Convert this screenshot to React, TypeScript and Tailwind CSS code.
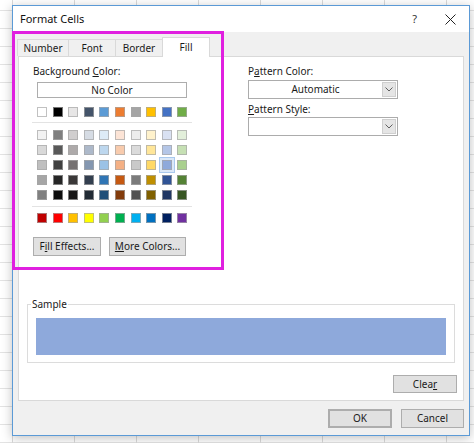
import React from 'react';

const font = { fontFamily: '"Noto Sans", "Open Sans", sans-serif' };

const themeRow = ['#FFFFFF', '#000000', '#E7E6E6', '#44546A', '#5B9BD5', '#ED7D31', '#A5A5A5', '#FFC000', '#4472C4', '#70AD47'];

const tints = [
  ['#F2F2F2', '#7F7F7F', '#D0CECE', '#D6DCE4', '#DDEBF7', '#FCE4D6', '#EDEDED', '#FFF2CC', '#D9E1F2', '#E2EFDA'],
  ['#D9D9D9', '#595959', '#AEAAAA', '#ADB9CA', '#BDD7EE', '#F8CBAD', '#DBDBDB', '#FFE699', '#B4C6E7', '#C6E0B4'],
  ['#BFBFBF', '#404040', '#757171', '#8497B0', '#9BC2E6', '#F4B084', '#C9C9C9', '#FFD966', '#8EA9DB', '#A9D08E'],
  ['#A6A6A6', '#262626', '#3B3838', '#333F4F', '#2F75B5', '#C65911', '#7B7B7B', '#BF8F00', '#305496', '#548235'],
  ['#808080', '#0D0D0D', '#171616', '#222B35', '#1F4E78', '#833C0C', '#525252', '#806000', '#203764', '#375623'],
];

const standard = ['#C00000', '#FF0000', '#FFC000', '#FFFF00', '#92D050', '#00B050', '#00B0F0', '#0070C0', '#002060', '#7030A0'];

function Swatch({ color, selected }: { color: string; selected?: boolean }) {
  return (
    <div
      className={
        'w-[10px] h-[10px] border border-[#a6a6a6]/70 ' +
        (selected ? 'shadow-[0_0_0_2px_#dbe8f8,0_0_0_3px_#a9c9ee]' : '')
      }
      style={{ backgroundColor: color }}
    />
  );
}

function SwatchRow({ colors, selectedIndex }: { colors: string[]; selectedIndex?: number }) {
  return (
    <div className="flex gap-x-[5.6px]">
      {colors.map((c, i) => (
        <Swatch key={i} color={c} selected={i === selectedIndex} />
      ))}
    </div>
  );
}

function Btn({ children, className = '' }: { children: React.ReactNode; className?: string }) {
  return (
    <div
      className={
        'flex items-center justify-center bg-[#e1e1e1] border border-[#adadad] text-[10px] text-[#1a1a1a] ' + className
      }
    >
      {children}
    </div>
  );
}

function Dropdown({ value }: { value?: string }) {
  return (
    <div className="flex w-[150px] h-[19px] bg-white border border-[#acacac]">
      <div className="flex-1 flex items-center justify-center text-[10px] text-[#1a1a1a]">{value}</div>
      <div className="w-[14px] my-[1px] mr-[1px] bg-[#e5e5e5] border border-[#cfcfcf] flex items-center justify-center">
        <svg width="8" height="5" viewBox="0 0 8 5">
          <path d="M0.5 0.5 L4 4 L7.5 0.5" fill="none" stroke="#606060" strokeWidth="1" />
        </svg>
      </div>
    </div>
  );
}

export default function App() {
  return (
    <div
      className="relative w-[474px] h-[443px] overflow-hidden bg-white pt-[5px] pl-[12px] bg-[linear-gradient(to_right,#dadada_1px,transparent_1px),linear-gradient(to_bottom,#e3e3e3_1px,transparent_1px)] bg-[size:62px_18px] bg-[position:12px_10px]"
      style={font}
    >
      {/* dialog */}
      <div className="w-[458px] h-[431px] border border-[#5b9ad6] bg-[#f0f0f0] flex flex-col shadow-[0_2px_10px_rgba(0,0,0,0.25)]">
        {/* title bar */}
        <div className="h-[26px] bg-white flex items-center pl-[7px] pr-[13px]">
          <span className="text-[11px] text-[#111]">Format Cells</span>
          <span className="ml-auto text-[11px] text-[#333] mr-[28px]">?</span>
          <svg width="11" height="11" viewBox="0 0 11 11">
            <path d="M0.5 0.5 L10.5 10.5 M10.5 0.5 L0.5 10.5" stroke="#222" strokeWidth="1" />
          </svg>
        </div>

        {/* body */}
        <div className="flex-1 flex flex-col px-[5px]">
          {/* tabs */}
          <div className="flex items-end h-[19px] mt-[5px] ml-[-1px]">
            <div className="w-[51px] h-[17px] border-t border-l border-[#d9d9d9] flex items-center justify-center text-[10px] text-[#1a1a1a]">
              Number
            </div>
            <div className="w-[47px] h-[17px] border-t border-l border-[#d9d9d9] flex items-center justify-center text-[10px] text-[#1a1a1a]">
              Font
            </div>
            <div className="w-[47px] h-[17px] border-t border-l border-[#d9d9d9] flex items-center justify-center text-[10px] text-[#1a1a1a]">
              Border
            </div>
            <div className="relative z-10 w-[48px] h-[20px] -mb-[1px] bg-white border-t border-l border-r border-[#d9d9d9] flex items-center justify-center text-[10px] text-[#1a1a1a]">
              Fill
            </div>
          </div>

          {/* panel */}
          <div className="h-[345px] bg-white border border-[#d9d9d9] flex flex-col">
            <div className="h-[247px] flex">
              {/* background color column */}
              <div className="w-[160px] ml-[13px] flex flex-col">
                <div className="mt-[7px] h-[14px] leading-[14px] pl-[1px] text-[10px] text-[#1a1a1a]">
                  Background <span className="underline">C</span>olor:
                </div>
                <div className="mt-[4px] ml-[5px] w-[150px] h-[16px] border border-[#adadad] flex items-center justify-center text-[10px] text-[#1a1a1a]">
                  No Color
                </div>
                <div className="mt-[9px] ml-[5px]">
                  <SwatchRow colors={themeRow} />
                </div>
                <div className="mt-[5px] h-px bg-[#e3e3e3]" />
                <div className="mt-[7px] ml-[5px] flex flex-col gap-y-[5px]">
                  {tints.map((row, i) => (
                    <SwatchRow key={i} colors={row} selectedIndex={i === 2 ? 8 : undefined} />
                  ))}
                </div>
                <div className="mt-[6px] h-px bg-[#e3e3e3]" />
                <div className="mt-[6px] ml-[5px]">
                  <SwatchRow colors={standard} />
                </div>
                <div className="mt-[14px] ml-[1px] flex gap-[8px]">
                  <Btn className="w-[68px] h-[19px]">
                    F<span className="underline">i</span>ll Effects...
                  </Btn>
                  <Btn className="w-[77px] h-[19px]">
                    <span className="underline">M</span>ore Colors...
                  </Btn>
                </div>
              </div>

              {/* pattern column */}
              <div className="ml-[56px] w-[150px] flex flex-col">
                <div className="mt-[7px] h-[14px] leading-[14px] text-[10px] text-[#1a1a1a]">
                  P<span className="underline">a</span>ttern Color:
                </div>
                <div className="mt-[2px]">
                  <Dropdown value="Automatic" />
                </div>
                <div className="mt-[3px] h-[14px] leading-[14px] text-[10px] text-[#1a1a1a]">
                  <span className="underline">P</span>attern Style:
                </div>
                <div className="mt-[1px]">
                  <Dropdown />
                </div>
              </div>
            </div>

            {/* sample group */}
            <div className="relative mx-[8px] h-[59px] border border-[#dcdcdc] pt-[13px] px-[8px]">
              <span className="absolute left-[3px] top-[-8px] bg-white px-[1px] text-[10px] leading-[14px] text-[#1a1a1a]">
                Sample
              </span>
              <div className="h-[37px] bg-[#8EA9DB]" />
            </div>

            <div className="flex justify-end mt-[12px] mr-[6px]">
              <Btn className="w-[64px] h-[18px]">
                Clea<span className="underline">r</span>
              </Btn>
            </div>
          </div>

          {/* footer */}
          <div className="flex justify-end gap-[9px] mt-[8px]">
            <Btn className="w-[64px] h-[19px] border-[#0078d7] border-2">OK</Btn>
            <Btn className="w-[63px] h-[19px]">Cancel</Btn>
          </div>
        </div>
      </div>

      {/* highlight rectangle drawn over the screenshot */}
      <div className="absolute left-[12px] top-[31px] w-[212px] h-[239px] border-[3px] border-[#e020e0] pointer-events-none" />
    </div>
  );
}
